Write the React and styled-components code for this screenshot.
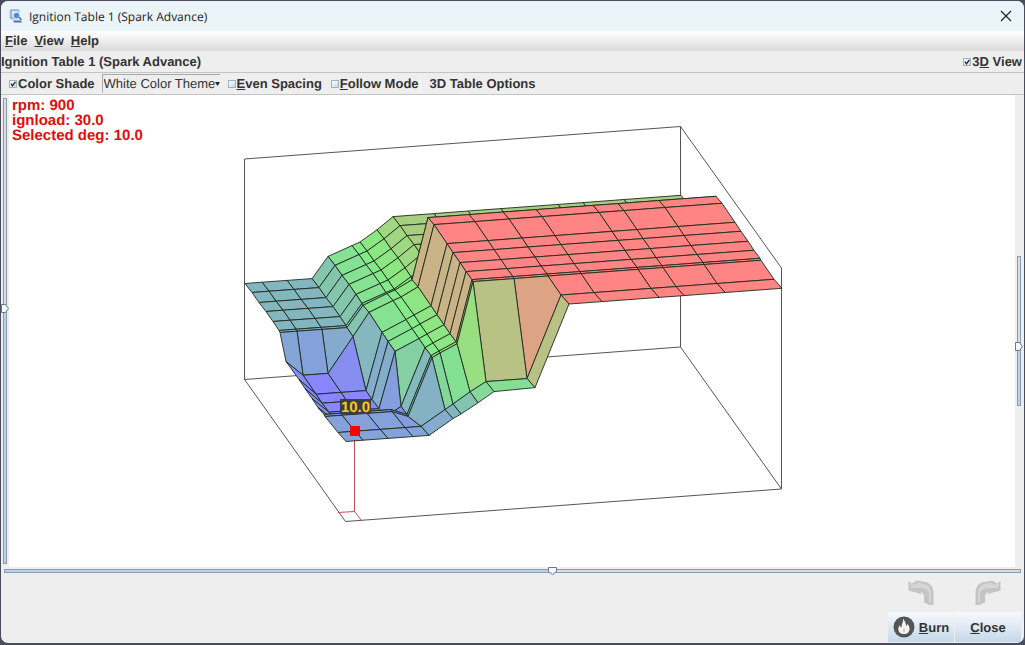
import React, { useState } from 'react'
import styled, { createGlobalStyle, css } from 'styled-components'

const GlobalStyle = createGlobalStyle`
  * {
    box-sizing: border-box;
  }
  body {
    margin: 0;
    background: #4a4c5c;
    font-family: 'Liberation Sans', Arial, sans-serif;
    font-size: 13px;
    color: #333;
    text-rendering: geometricPrecision;
  }
  button, select, input {
    font: inherit;
    color: inherit;
    margin: 0;
    text-rendering: inherit;
  }
`

/* ---------- window frame ---------- */

const Window = styled.div`
  display: flex;
  flex-direction: column;
  height: calc(100vh - 3px);
  min-height: 420px;
  margin: 1px 1px 2px;
  background: #eeeeee;
  border-radius: 7px;
  overflow: hidden;
`
const TitleBar = styled.header`
  display: flex;
  align-items: center;
  flex-shrink: 0;
  gap: 6px;
  height: 30px;
  padding: 0 12px 0 8px;
  background: #ebf4f8;
  font-family: 'Open Sans', 'Noto Sans', sans-serif;
  font-size: 12px;
  color: #222;
`
const TitleText = styled.span`
  flex: 1;
`
const PlainButton = styled.button`
  display: flex;
  align-items: center;
  padding: 0;
  border: none;
  background: none;
  line-height: 16px;
  white-space: nowrap;
`
const MenuBar = styled.nav`
  display: flex;
  align-items: center;
  flex-shrink: 0;
  gap: 7px;
  height: 20px;
  padding: 0 4px;
  background: linear-gradient(#ffffff, #dadada);
  font-weight: bold;

  ${PlainButton} {
    display: block;
  }
`
const HeaderRow = styled.div`
  display: flex;
  align-items: center;
  justify-content: space-between;
  flex-shrink: 0;
  height: 22px;
  padding-right: 2px;
  border-bottom: 1px solid #c4c4c4;
  font-weight: bold;
`
const Heading = styled.h1`
  margin: 0;
  font-size: 13px;
`
const Toolbar = styled.div`
  display: flex;
  align-items: center;
  flex-shrink: 0;
  height: 22px;
  padding-left: 8px;
  border-bottom: 1px solid #c4c4c4;
  font-weight: bold;
`

/* ---------- controls ---------- */

const CheckLabel = styled.label`
  display: flex;
  align-items: center;
  gap: 1px;
  margin-right: ${(props) => props.$space || 0}px;
  line-height: 16px;
  white-space: nowrap;
`
const CheckBox = styled.input`
  appearance: none;
  width: 8px;
  height: 8px;
  border: 1px solid #9db3c8;
  background: linear-gradient(135deg, #ffffff, #c4d9ec);

  &:checked {
    background: url("data:image/svg+xml,%3Csvg xmlns='http://www.w3.org/2000/svg' viewBox='0 0 6 6'%3E%3Cpath d='M1 2.5L2.4 4.8L5.4 .8' fill='none' stroke='%23222' stroke-width='1.3'/%3E%3C/svg%3E"),
      linear-gradient(135deg, #ffffff, #c4d9ec);
  }
`
const ThemeSelect = styled.select`
  appearance: none;
  width: 118px;
  height: 19px;
  margin-right: 8px;
  padding: 0 5px 0 1px;
  border: 1px solid #a8a8a8;
  border-right: none;
  border-bottom-color: #eeeeee;
  border-radius: 0;
  background: url("data:image/svg+xml,%3Csvg xmlns='http://www.w3.org/2000/svg' width='5' height='4'%3E%3Cpath d='M0 0H5L2.5 4Z' fill='%23222'/%3E%3C/svg%3E")
    no-repeat right center;
  font-weight: normal;
`
const GroupBreak = styled.span`
  width: 10px;
  height: 20px;
  border-left: 1px solid #f8f8f8;
`

const thumbRight =
  "url(\"data:image/svg+xml,%3Csvg xmlns='http://www.w3.org/2000/svg' width='8' height='9'%3E%3Cpath d='M.5 .5H4.5L7.5 4.5L4.5 8.5H.5Z' fill='%23f4f8fc' stroke='%23667788'/%3E%3C/svg%3E\")"
const thumbDown =
  "url(\"data:image/svg+xml,%3Csvg xmlns='http://www.w3.org/2000/svg' width='9' height='8'%3E%3Cpath d='M.5 .5H8.5V4.5L4.5 7.5L.5 4.5Z' fill='%23f4f8fc' stroke='%23667788'/%3E%3C/svg%3E\")"

const Slider = styled.input`
  appearance: none;
  display: block;
  background: none;

  ${(props) =>
    props.$vertical
      ? css`
          writing-mode: vertical-lr;
          direction: rtl;
          width: 8px;
          height: ${props.$length};
        `
      : css`
          width: 100%;
          height: 8px;
        `}

  &::-webkit-slider-runnable-track {
    border: 1px solid #8b9bb0;
    ${(props) =>
      props.$vertical
        ? css`
            width: 4px;
            background: linear-gradient(#d8dde2 ${props.$split}, #b9cfec ${props.$split});
          `
        : css`
            height: 4px;
            background: linear-gradient(90deg, #b9cfec ${props.$split}, #d8dde2 ${props.$split});
          `}
  }
  &::-webkit-slider-thumb {
    appearance: none;
    border: none;
    width: ${(props) => (props.$vertical ? 8 : 9)}px;
    height: ${(props) => (props.$vertical ? 9 : 8)}px;
    background: ${(props) => (props.$vertical ? thumbRight : thumbDown)} no-repeat;
    ${(props) => (props.$vertical ? 'margin-left: -3px;' : 'margin-top: -3px;')}
  }
`

/* ---------- 3D area ---------- */

const Stage = styled.main`
  flex: 1;
  min-height: 0;
  display: grid;
  grid-template-columns: 8px minmax(0, 1fr) 9px;
  grid-template-rows: minmax(0, 1fr);
`
const SliderColumn = styled.div`
  display: flex;
  align-items: center;
`
const Plot = styled.section`
  position: relative;
  min-height: 0;
  background: #fff;
`
const PlotSvg = styled.svg`
  display: block;
  width: 100%;
  height: 100%;
`
const Readout = styled.div`
  position: absolute;
  top: 3px;
  left: 3px;
  color: #e00d0d;
  font-size: 15px;
  font-weight: bold;
  line-height: 15px;
`
const BottomSlider = styled.div`
  flex-shrink: 0;
  padding: 0 3px;
`

/* ---------- footer ---------- */

const Footer = styled.footer`
  display: grid;
  flex-shrink: 0;
  grid-template-columns: 66px 66px;
  justify-content: end;
  gap: 5px 1px;
  padding: 4px 3px 1px 0;
`
const HistoryButton = styled(PlainButton)`
  justify-content: center;
  height: 28px;
`
const ActionButton = styled.button`
  display: flex;
  align-items: center;
  justify-content: center;
  gap: 4px;
  height: 30px;
  padding: 0;
  border: none;
  background: linear-gradient(#f6f9fc, #dfe9f4 50%, #c3d8ea);
  font-weight: bold;
`

// axis positions on the floor, in pixels from the back left corner
const COLS = [0, 17, 42, 67, 83, 107, 115, 132, 148, 189, 223, 256, 313, 338, 379, 436]
const ROWS = [
  [0, 0], [7, 9], [14, 19], [21, 28], [28, 38], [34, 47], [35, 49], [41, 56],
  [54, 75], [60, 84], [67, 94], [73, 103], [79, 111], [80, 113], [93, 132], [101, 142],
]

const fill = (list, last) => [...list, ...Array(16 - list.length).fill(last)]
const idle = fill([96, 96, 96, 96, 117, 126, 129, 140], 152)

// surface height for every row, back to front
const HEIGHTS = [
  idle,
  idle,
  idle,
  idle,
  idle,
  idle,
  fill([96, 96, 96, 96, 117, 127, 130, 139], 200),
  fill([74, 59, 59, 94, 117, 127, 130, 139], 200),
  fill([75, 59, 59, 59, 116, 127, 131, 139], 200),
  fill([75, 59, 59, 59, 116, 127, 131, 139], 200),
  fill([75, 60, 60, 60, 116, 127, 131, 139], 200),
  fill([75, 60, 60, 60, 70, 127, 131, 139], 200),
  fill([76, 76, 76, 76, 70, 127, 131, 139], 200),
  fill([76, 76, 76, 76, 70, 127, 131, 139], 200),
  fill([79, 79, 79, 79, 79, 94, 99, 110, 119, 119], 200),
  fill([80, 80, 80, 80, 80, 95, 99, 109, 119, 120], 201),
]

const RAMP = [
  [59, [138, 134, 255]],
  [74, [132, 148, 232]],
  [77, [132, 160, 220]],
  [95, [132, 181, 192]],
  [106, [132, 196, 176]],
  [112, [132, 213, 156]],
  [120, [132, 224, 148]],
  [130, [132, 236, 132]],
  [142, [154, 222, 130]],
  [152, [168, 206, 130]],
  [160, [185, 193, 133]],
  [170, [203, 178, 134]],
  [179, [219, 165, 133]],
  [198, [255, 132, 132]],
]

function shade(h) {
  if (h <= RAMP[0][0]) return `rgb(${RAMP[0][1].join(',')})`
  for (let i = 1; i < RAMP.length; i++) {
    const [h1, c1] = RAMP[i]
    const [h0, c0] = RAMP[i - 1]
    if (h <= h1) {
      const t = (h - h0) / (h1 - h0)
      return `rgb(${c0.map((v, k) => Math.round(v + (c1[k] - v) * t)).join(',')})`
    }
  }
  return `rgb(${RAMP[RAMP.length - 1][1].join(',')})`
}

function project(c, r, h) {
  const x = 245 + COLS[c] + ROWS[r][0]
  const y = 379.5 - COLS[c] * 0.0738 + ROWS[r][1] - h
  return `${x},${y.toFixed(1)}`
}

// far cells first, so nearer ones cover them
const cells = []
for (let r = 0; r < 15; r++) {
  for (let c = 14; c >= 0; c--) {
    const corners = [[c, r], [c + 1, r], [c + 1, r + 1], [c, r + 1]]
    const mean = corners.reduce((sum, [i, j]) => sum + HEIGHTS[j][i], 0) / 4
    cells.push({
      key: `${r}-${c}`,
      points: corners.map(([i, j]) => project(i, j, HEIGHTS[j][i])).join(' '),
      color: shade(mean),
    })
  }
}

function Surface() {
  return (
    <PlotSvg viewBox="9 95 1006 472" role="img" aria-label="Ignition surface">
      <g fill="none" stroke="#555" strokeWidth="1">
        <path d="M244.5 379.5V159L680.5 126.5L781.5 268V489L345.5 521.5L244.5 379.5L680.5 347L781.5 489" />
        <path d="M680.5 126.5V347" />
      </g>
      <path d="M338 512.5L354.5 511.5L361.5 520.5M354.5 511.5V432" fill="none" stroke="#c8505a" strokeWidth="1" />
      <g stroke="#1d2a1d" strokeWidth="0.9" strokeLinejoin="round">
        {cells.map((cell) => (
          <polygon key={cell.key} points={cell.points} fill={cell.color} />
        ))}
      </g>
      <rect x="350" y="426" width="10" height="10" fill="#ff0000" />
      <rect x="340" y="399" width="31" height="15" fill="#3c3c44" />
      <text x="355.5" y="412" textAnchor="middle" fontSize="15" fontWeight="bold" fill="#f8c81c">
        10.0
      </text>
    </PlotSvg>
  )
}

function AppIcon() {
  return (
    <svg width="14" height="14" viewBox="0 0 14 14" aria-hidden="true">
      <rect x="1" y="0.5" width="9" height="9.5" rx="1" fill="#8fb6d8" stroke="#a9c4da" />
      <rect x="3" y="2" width="6" height="6" fill="#d8e8f4" />
      <circle cx="7.5" cy="6.5" r="3.3" fill="#4f8fc8" stroke="#e8f2fa" />
      <path d="M4 11.5H12L13 13.5H5Z" fill="#5570a0" />
      <path d="M10 8L12.5 11" stroke="#55709c" strokeWidth="1.5" />
    </svg>
  )
}

function CloseIcon() {
  return (
    <svg width="12" height="12" viewBox="0 0 12 12" aria-hidden="true">
      <path d="M1 1L11 11M11 1L1 11" stroke="#222" strokeWidth="1.2" />
    </svg>
  )
}

function TurnArrow({ flip }) {
  return (
    <svg width="26" height="26" viewBox="0 0 26 26" aria-hidden="true">
      <g transform={flip ? 'translate(26 0) scale(-1 1)' : undefined}>
        <path
          d="M0.5 1L4 3.5L9 0.5L19 2.5Q25 5 25.5 12V25H21.5L16 22.5V17Q16 12.5 12 12L14 14.5L8 12.5L0.5 10.5Z"
          fill="#c4c4c4"
        />
        <path d="M2 2.5L6 5L10 2.5L18 4.5Q22 6 23 12V23L21 22V13Q19 8 12 8L3 8Z" fill="#d6d6d6" />
      </g>
    </svg>
  )
}

function FlameIcon() {
  return (
    <svg width="22" height="22" viewBox="0 0 22 22" aria-hidden="true">
      <circle cx="11" cy="11" r="10.5" fill="#555555" />
      <path
        d="M10 2.5C11.5 5 13.3 7 13 10C14 9.6 14.3 8.8 14.3 7.8C16.8 10.5 17.5 13.5 15.6 16C13.8 18.7 8.2 18.8 6.2 16C4.7 13.8 5.2 11 7 9C7 10.4 7.5 11.3 8.5 11.7C8.2 8.4 10.7 6.3 10 2.5Z"
        fill="#f4f4f4"
      />
      <path d="M11 11.5C12 13.5 13 15 11 17C9 15.3 10.2 13.4 11 11.5Z" fill="#cfcfcf" />
    </svg>
  )
}

export default function App() {
  const [shadeOn, setShadeOn] = useState(true)
  const [view3d, setView3d] = useState(true)

  return (
    <>
      <GlobalStyle />
      <Window>
        <TitleBar>
          <AppIcon />
          <TitleText>Ignition Table 1 (Spark Advance)</TitleText>
          <PlainButton aria-label="Close window">
            <CloseIcon />
          </PlainButton>
        </TitleBar>

        <MenuBar>
          <PlainButton><u>F</u>ile</PlainButton>
          <PlainButton><u>V</u>iew</PlainButton>
          <PlainButton><u>H</u>elp</PlainButton>
        </MenuBar>

        <HeaderRow>
          <Heading>Ignition Table 1 (Spark Advance)</Heading>
          <CheckLabel>
            <CheckBox type="checkbox" checked={view3d} onChange={() => setView3d(!view3d)} />
            <span>3<u>D</u> View</span>
          </CheckLabel>
        </HeaderRow>

        <Toolbar>
          <CheckLabel $space={7}>
            <CheckBox type="checkbox" checked={shadeOn} onChange={() => setShadeOn(!shadeOn)} />
            <span>Color Shade</span>
          </CheckLabel>
          <ThemeSelect aria-label="Color theme" defaultValue="white">
            <option value="white">White Color Theme</option>
            <option value="black">Black Color Theme</option>
          </ThemeSelect>
          <CheckLabel $space={9}>
            <CheckBox type="checkbox" />
            <span><u>E</u>ven Spacing</span>
          </CheckLabel>
          <CheckLabel $space={1}>
            <CheckBox type="checkbox" />
            <span><u>F</u>ollow Mode</span>
          </CheckLabel>
          <GroupBreak />
          <PlainButton>3D Table Options</PlainButton>
        </Toolbar>

        <Stage>
          <SliderColumn>
            <Slider type="range" aria-label="Tilt" min="0" max="100" defaultValue="55"
              $vertical $length="calc(100% - 6px)" $split="45%" />
          </SliderColumn>
          <Plot>
            <Surface />
            <Readout>
              <div>rpm: 900</div>
              <div>ignload: 30.0</div>
              <div>Selected deg: 10.0</div>
            </Readout>
          </Plot>
          <SliderColumn>
            <Slider type="range" aria-label="Height scale" min="0" max="100" defaultValue="39"
              $vertical $length="150px" $split="60%" />
          </SliderColumn>
        </Stage>
        <BottomSlider>
          <Slider type="range" aria-label="Rotation" min="0" max="100" defaultValue="54" $split="54%" />
        </BottomSlider>

        <Footer>
          <HistoryButton aria-label="Undo"><TurnArrow /></HistoryButton>
          <HistoryButton aria-label="Redo"><TurnArrow flip /></HistoryButton>
          <ActionButton>
            <FlameIcon />
            <span><u>B</u>urn</span>
          </ActionButton>
          <ActionButton>
            <span><u>C</u>lose</span>
          </ActionButton>
        </Footer>
      </Window>
    </>
  )
}
